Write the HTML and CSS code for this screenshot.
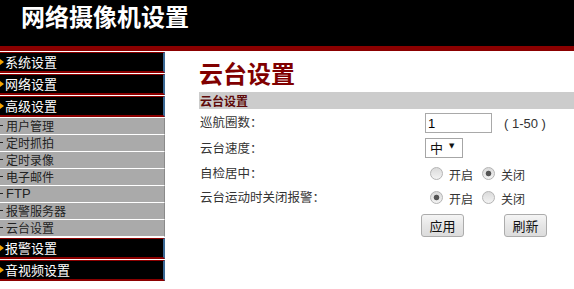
FILE: index.html
```html
<!DOCTYPE html>
<html lang="zh-CN">
<head>
<meta charset="utf-8">
<title>网络摄像机设置</title>
<link rel="stylesheet" href="styles.css">
</head>
<body>
<header class="top">
  <h1 class="brand">网络摄像机设置</h1>
</header>
<div class="layout">
  <nav class="side">
    <a class="nav-item"><span class="bullet"></span>系统设置</a>
    <a class="nav-item"><span class="bullet"></span>网络设置</a>
    <a class="nav-item"><span class="bullet"></span>高级设置</a>
    <ul class="sub">
      <li class="sub-item"><span class="dash"></span>用户管理</li>
      <li class="sub-item"><span class="dash"></span>定时抓拍</li>
      <li class="sub-item"><span class="dash"></span>定时录像</li>
      <li class="sub-item"><span class="dash"></span>电子邮件</li>
      <li class="sub-item"><span class="dash"></span><span class="latin">FTP</span></li>
      <li class="sub-item"><span class="dash"></span>报警服务器</li>
      <li class="sub-item"><span class="dash"></span>云台设置</li>
    </ul>
    <a class="nav-item"><span class="bullet"></span>报警设置</a>
    <a class="nav-item"><span class="bullet"></span>音视频设置</a>
  </nav>
  <main class="content">
    <h2 class="page-title">云台设置</h2>
    <div class="section-bar">云台设置</div>
    <div class="form">
      <div class="row row-a">
        <span class="label">巡航圈数：</span>
        <span class="value"><input class="text-input" type="text" value="1"><span class="hint">( 1-50 )</span></span>
      </div>
      <div class="row row-b">
        <span class="label">云台速度：</span>
        <span class="value"><span class="select"><span class="select-text">中</span><span class="select-arrow">▼</span></span></span>
      </div>
      <div class="row row-c">
        <span class="label">自检居中：</span>
        <span class="value">
          <input class="radio" type="radio" name="center"><span class="opt">开启</span>
          <input class="radio" type="radio" name="center" checked><span class="opt">关闭</span>
        </span>
      </div>
      <div class="row row-c">
        <span class="label">云台运动时关闭报警：</span>
        <span class="value">
          <input class="radio" type="radio" name="alarm" checked><span class="opt">开启</span>
          <input class="radio" type="radio" name="alarm"><span class="opt">关闭</span>
        </span>
      </div>
    </div>
    <div class="actions">
      <button class="btn" type="button">应用</button>
      <button class="btn" type="button">刷新</button>
    </div>
  </main>
</div>
</body>
</html>
```

FILE: styles.css
```css
* { box-sizing: border-box; }

html, body {
  margin: 0;
  padding: 0;
  background: #ffffff;
}

body {
  font-family: "Noto Sans CJK SC", "Liberation Sans", sans-serif;
  color: #333333;
  overflow: hidden;
}

/* header */
.top {
  height: 51px;
  background: #000000;
  border-bottom: 5px solid #8b0000;
  padding-left: 21px;
  padding-top: 4px;
}

.brand {
  margin: 0;
  font-family: "Liberation Sans", "Noto Sans CJK SC", sans-serif;
  font-size: 24px;
  line-height: 27px;
  font-weight: bold;
  color: #ffffff;
}

/* layout */
.layout {
  display: flex;
  align-items: flex-start;
}

/* side navigation */
.side {
  width: 165px;
  flex: none;
  display: flex;
  flex-direction: column;
  padding-top: 1px;
}

.nav-item {
  display: flex;
  align-items: center;
  height: 21px;
  margin-bottom: 1px;
  background: #000000;
  border-top: 1px solid #8b0000;
  border-bottom: 2px solid #8b0000;
  border-right: 2px solid #3a6996;
  color: #ffffff;
  font-size: 13px;
  line-height: 18px;
  text-decoration: none;
}

.bullet {
  width: 0;
  height: 0;
  border-left: 4px solid #f5a300;
  border-top: 3px solid transparent;
  border-bottom: 3px solid transparent;
  margin-right: 1px;
}

.sub {
  list-style: none;
  margin: 0 0 1px 0;
  padding: 0;
}

.sub-item {
  display: flex;
  align-items: center;
  height: 17px;
  background: #aaaaaa;
  border-bottom: 1px solid #ffffff;
  border-right: 1px solid #8a8a8a;
  color: #222222;
  font-size: 12px;
  line-height: 16px;
  white-space: nowrap;
}

.dash {
  width: 3px;
  height: 1px;
  margin-right: 3px;
  margin-top: -1px;
  background: #222222;
}

.latin {
  font-family: "Liberation Sans", sans-serif;
  font-size: 13px;
}

/* main content */
.content {
  flex: 1;
  padding-left: 34px;
}

.page-title {
  margin: 0;
  padding-top: 9px;
  margin-bottom: 7px;
  font-size: 24px;
  line-height: 25px;
  font-weight: bold;
  color: #800000;
}

.section-bar {
  height: 17px;
  background: #cccccc;
  padding-left: 1px;
  font-size: 12px;
  line-height: 17px;
  font-weight: bold;
  color: #5e0a0a;
}

.form {
  display: flex;
  flex-direction: column;
}

.row {
  display: grid;
  grid-template-columns: 226px 1fr;
  align-items: center;
}

.row-a { height: 26px; }
.row-b { height: 26px; }
.row-c { height: 24px; }

.label {
  padding-left: 1px;
  font-size: 12.5px;
  line-height: 16px;
  color: #333333;
  white-space: nowrap;
}

.value {
  display: flex;
  align-items: center;
}

.text-input {
  width: 67px;
  height: 20px;
  margin: 2px 0 0 0;
  padding: 0 2px;
  border: 1px solid #a9a9a9;
  font-family: "Liberation Sans", sans-serif;
  font-size: 13px;
  color: #000000;
  background: #ffffff;
  outline: none;
}

.hint {
  margin-left: 12px;
  margin-top: 2px;
  font-family: "Liberation Sans", sans-serif;
  font-size: 13px;
  color: #333333;
}

.select {
  display: inline-flex;
  align-items: flex-start;
  width: 38px;
  height: 20px;
  border: 1px solid #a6a6a6;
  background: #ffffff;
}

.select-text {
  margin-left: 4px;
  font-size: 13px;
  line-height: 18px;
  color: #111111;
}

.select-arrow {
  margin-left: 6px;
  margin-top: 3px;
  font-family: "DejaVu Sans", sans-serif;
  font-size: 7px;
  line-height: 8px;
  color: #111111;
}

.radio {
  appearance: none;
  -webkit-appearance: none;
  width: 13px;
  height: 13px;
  margin: 0 0 0 5px;
  border: 1px solid #b4b4b4;
  border-radius: 50%;
  background: linear-gradient(#dadada, #f3f3f3);
}

.radio + .opt + .radio {
  margin-left: 9px;
}

.radio:checked {
  background:
    radial-gradient(circle, #555555 0, #555555 2.4px, rgba(85,85,85,0) 3.2px),
    linear-gradient(#dadada, #f3f3f3);
}

.opt {
  margin-left: 6px;
  margin-top: 4px;
  font-size: 12px;
  line-height: 16px;
  color: #333333;
}

.actions {
  display: flex;
  gap: 40px;
  padding-top: 5px;
  padding-left: 222px;
}

.btn {
  width: 43px;
  height: 23px;
  padding: 0;
  border: 1px solid #acacac;
  border-radius: 3px;
  background: linear-gradient(#f5f5f5, #e6e6e6 50%, #dcdcdc);
  font-family: "Noto Sans CJK SC", sans-serif;
  font-size: 13px;
  line-height: 20px;
  color: #111111;
}
```
